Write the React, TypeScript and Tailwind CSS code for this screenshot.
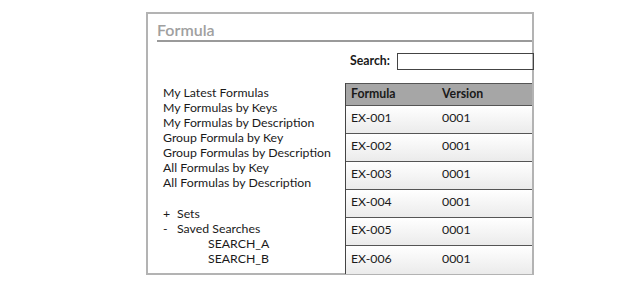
const links = [
  "My Latest Formulas",
  "My Formulas by Keys",
  "My Formulas by Description",
  "Group Formula by Key",
  "Group Formulas by Description",
  "All Formulas by Key",
  "All Formulas by Description",
];

const rows = ["EX-001", "EX-002", "EX-003", "EX-004", "EX-005", "EX-006"];

export default function App() {
  return (
    <div
      className="w-[627px] h-[295px] bg-white pt-[12px] pl-[146px] text-[#1a1a1a]"
      style={{ fontFamily: "Lato, 'Liberation Sans', sans-serif" }}
    >
      <div className="w-[388px] h-[263px] border-2 border-[#b3b3b3] flex flex-col">
        {/* Title */}
        <div className="ml-[9px] pt-[6px] border-b-2 border-[#9a9a9a]">
          <h1 className="text-[16px] leading-[20px] font-semibold text-[#a0a0a0]">Formula</h1>
        </div>

        <div className="flex flex-1 min-h-0">
          {/* Left nav */}
          <div className="w-[197px] shrink-0 pl-[15px] pt-[43px] text-[12.3px] leading-[15px] whitespace-nowrap">
            <ul>
              {links.map((l) => (
                <li key={l}>{l}</li>
              ))}
            </ul>
            <ul className="mt-[16px]">
              <li className="flex">
                <span className="w-[14px]">+</span>
                <span>Sets</span>
              </li>
              <li className="flex">
                <span className="w-[14px]">-</span>
                <span>Saved Searches</span>
              </li>
              <li className="pl-[45px]">SEARCH_A</li>
              <li className="pl-[45px]">SEARCH_B</li>
            </ul>
          </div>

          {/* Right: search + table */}
          <div className="flex-1 min-w-0 flex flex-col text-[12.3px] -mr-[2px]">
            <div className="flex items-center mt-[11px] h-[17px] pl-[5px]">
              <span className="font-bold w-[47px]">Search:</span>
              <input className="flex-1 min-w-0 h-[17px] border border-[#444] outline-none" />
            </div>
            <div className="mt-[13px] flex-1 border-l border-[#444] mr-[2px]">
              <div className="flex items-center h-[23px] bg-[#a6a6a6] border-y border-[#555] font-bold">
                <span className="w-[96px] pl-[5px]">Formula</span>
                <span>Version</span>
              </div>
              {rows.map((r) => (
                <div
                  key={r}
                  className="flex items-center h-[28px] pb-[2px] border-b border-[#555] last:border-b-0 bg-gradient-to-b from-white to-[#ebebeb]"
                >
                  <span className="w-[96px] pl-[5px]">{r}</span>
                  <span>0001</span>
                </div>
              ))}
            </div>
          </div>
        </div>
      </div>
    </div>
  );
}
